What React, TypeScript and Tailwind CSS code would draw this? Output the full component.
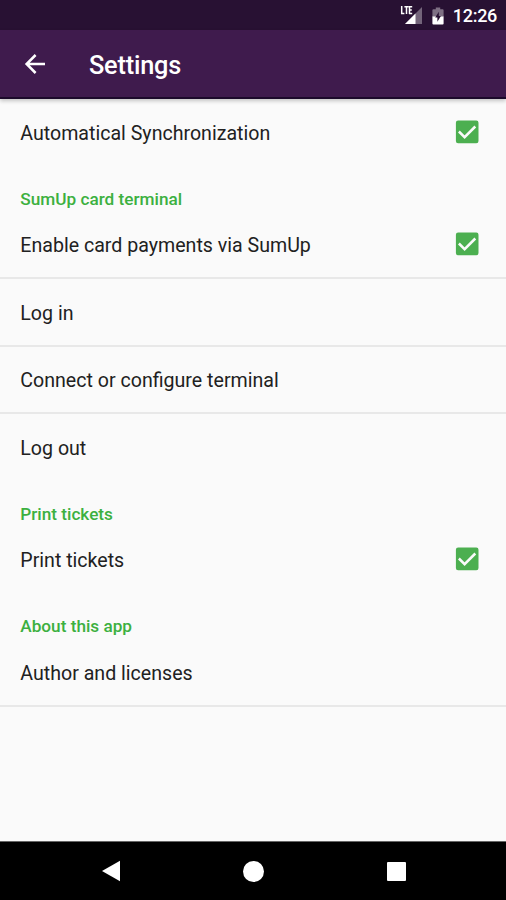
import React from 'react'

type RowProps = {
    label: string;
    checked?: boolean;
    className?: string;
    labelClassName?: string;
}

function Checkbox() {
    return (
        <svg className="w-6 h-6 shrink-0" viewBox="0 0 24 24">
            <rect x="0.9" y="0.6" width="22.6" height="22.6" rx="2.2" fill="#4caf50" />
            <path d="M3.9 11.5l5.7 5.7L20.3 6.5" fill="none" stroke="#fafafa" strokeWidth="2.5" />
        </svg>
    )
}

function Row({ label, checked, className = 'h-[68px]', labelClassName = 'pt-[3px]' }: RowProps) {
    return (
        <div className={`flex items-center justify-between pl-[20.3px] pr-[27px] shrink-0 border-[#e8e8e8] ${className}`}>
            <span className={`text-[19.6px] leading-6 text-[#212121] ${labelClassName}`}>{label}</span>
            {checked && <Checkbox />}
        </div>
    )
}

function Category({ title }: { title: string }) {
    return (
        <h2 className="h-[45px] shrink-0 pt-[22px] pl-[20.3px] text-[17.2px] leading-[22px] font-medium text-[#3cb040]">{title}</h2>
    )
}

function StatusBar() {
    return (
        <div className="h-[30px] shrink-0 bg-[#281133] flex items-center justify-end pr-[9px] text-white">
            <svg className="w-[23px] h-5 mr-[9px]" viewBox="0 0 23 20">
                <path d="M22 2v17H5z" fill="#fff" opacity="0.35" />
                <path d="M15.5 8.5V19H5z" fill="#fff" />
                <path d="M1.7 1v8M1 8.4h3.4M4.4 1.7h4.2M6.5 1.7V9M9.5 1v8M9 1.7h3.2M9 5h2.8M9 8.4h3.2" fill="none" stroke="#fff" strokeWidth="1.5" />
            </svg>
            <svg className="w-3 h-[18px] mr-[9px] mt-0.5" viewBox="0 0 12 18">
                <path d="M3.8 0.5h4.4v1.8h2.4a1 1 0 0 1 1 1V10H0.4V3.3a1 1 0 0 1 1-1h2.4z" fill="#fff" opacity="0.4" />
                <path d="M0.4 9.5h11.2v7a1 1 0 0 1-1 1H1.4a1 1 0 0 1-1-1z" fill="#fff" />
                <path d="M6.8 4.8L3.2 10.6h2.2v4.2l3.5-5.9H6.8z" fill="#281133" />
            </svg>
            <span className="text-[18px] leading-6 mt-0.5 font-medium tracking-[-0.3px]">12:26</span>
        </div>
    )
}

export default function App() {
    return (
        <div className="w-full h-screen flex flex-col overflow-hidden bg-[#fafafa] font-['Roboto',sans-serif]">
            <StatusBar />
            <header className="h-[69px] shrink-0 bg-[#3f1b4d] border-b-2 border-[#1c0a2b] shadow-[0_2px_4px_rgba(0,0,0,0.22)] flex items-center pl-6 text-white">
                <svg className="w-[22px] h-[22px] mt-px" viewBox="0 0 22 22">
                    <path d="M21 11H3M11.6 2L2.6 11l9 9" fill="none" stroke="#fff" strokeWidth="2.5" />
                </svg>
                <h1 className="ml-[43px] mt-1 text-[25.3px] leading-8 font-medium tracking-[-0.2px]">Settings</h1>
            </header>
            <main className="flex-1 flex flex-col">
                <Row label="Automatical Synchronization" checked className="h-[67px] pb-px" labelClassName="pt-[4px]" />
                <Category title="SumUp card terminal" />
                <Row label="Enable card payments via SumUp" checked className="h-[68px] border-b-2" />
                <Row label="Log in" className="h-[68px] border-b-2" />
                <Row label="Connect or configure terminal" className="h-[67px] border-b-2" />
                <Row label="Log out" className="h-[67px]" labelClassName="pt-[2px]" />
                <Category title="Print tickets" />
                <Row label="Print tickets" checked className="h-[67px] pb-px" />
                <Category title="About this app" />
                <Row label="Author and licenses" className="h-[69px] border-b-2" labelClassName="pt-[4px]" />
            </main>
            <nav className="h-[59px] shrink-0 bg-black border-t border-[#666] flex items-center">
                <svg className="w-5 h-[22px] ml-[101px]" viewBox="0 0 20 22">
                    <path d="M19 0.8v20.4L1 11z" fill="#fff" />
                </svg>
                <div className="size-[21px] rounded-full bg-white ml-[122px]" />
                <div className="w-[19px] h-[19px] rounded-[1px] bg-white ml-[123px]" />
            </nav>
        </div>
    )
}
